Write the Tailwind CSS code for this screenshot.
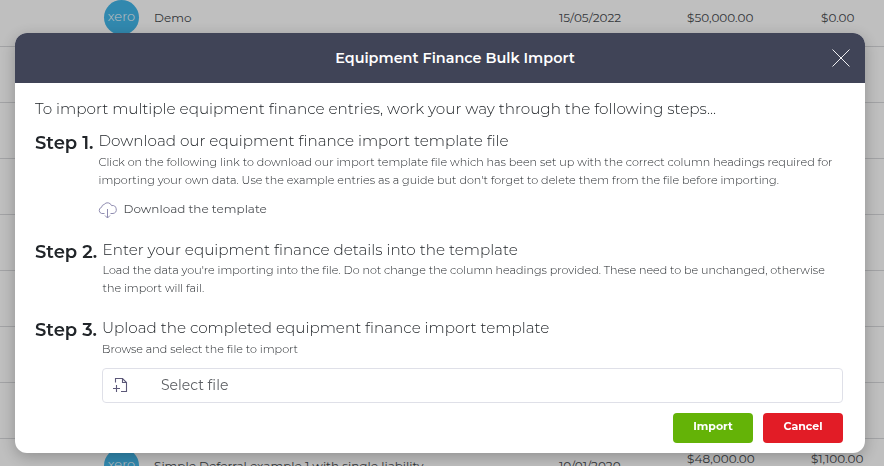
<!DOCTYPE html>
<html lang="en">
<head>
  <meta charset="UTF-8">
  <meta name="viewport" content="width=device-width, initial-scale=1.0">
  <title>Equipment Finance Bulk Import</title>
  <script src="https://cdn.jsdelivr.net/npm/@tailwindcss/browser@4"></script>
</head>
<body class="h-screen overflow-hidden bg-white font-[Montserrat,Inter,sans-serif] text-[#212529]">
  <!-- Finance list behind the modal -->
  <div class="-mt-[10px] h-[476px] overflow-hidden text-xs whitespace-nowrap text-[#45494d]">
    <div class="flex h-[57px] items-center border-b border-[#d9dadd] pl-[104px]">
      <div class="-mt-0.5 flex size-[35px] items-center justify-center rounded-full bg-[#42b6e9] pb-px text-[13px] font-light text-white">xero</div>
      <div class="-mt-px ml-[15px] w-[405px]">Demo</div>
      <div class="-mt-px w-[128px]">15/05/2022</div>
      <div class="-mt-px w-[134px]">$50,000.00</div>
      <div class="-mt-px">$0.00</div>
    </div>
    <div class="h-14 border-b border-[#d9dadd]"></div>
    <div class="h-14 border-b border-[#d9dadd]"></div>
    <div class="h-14 border-b border-[#d9dadd]"></div>
    <div class="h-14 border-b border-[#d9dadd]"></div>
    <div class="h-14 border-b border-[#d9dadd]"></div>
    <div class="h-14 border-b border-[#d9dadd]"></div>
    <div class="h-14 border-b border-[#d9dadd]"></div>
    <div class="flex h-14 items-center pl-[104px]">
      <div class="-mt-1 flex size-[35px] items-center justify-center rounded-full bg-[#42b6e9] pb-px text-[13px] font-light text-white">xero</div>
      <div class="-mt-0.5 ml-[15px] w-[405px]">Simple Deferral example 1 with single liability</div>
      <div class="-mt-0.5 w-[128px]">10/01/2020</div>
      <div class="-mt-4 w-[124px]">$48,000.00</div>
      <div class="-mt-4">$1,100.00</div>
    </div>
  </div>

  <!-- Modal -->
  <div class="fixed inset-0 bg-black/25 px-[15px] pt-[33px]">
    <div class="h-[420px] w-[850px] overflow-hidden rounded-xl bg-white shadow-[0_4px_16px_rgba(0,0,0,0.25)]">
      <div class="flex h-[50px] items-center bg-[#404457] pr-[15px] pl-[63px]">
        <h2 class="flex-1 pt-px text-center text-[14.4px] font-semibold text-white">Equipment Finance Bulk Import</h2>
        <svg class="size-[18px]" viewBox="0 0 18 18" fill="none" stroke="#f0f0f3" stroke-width="1"><path d="M0.5 0.5 17.5 17.5M17.5 0.5 0.5 17.5"/></svg>
      </div>
      <div class="pt-[14px] pr-[22px] pl-5 font-light whitespace-nowrap">
        <p class="text-[15.22px] leading-6">To import multiple equipment finance entries, work your way through the following steps...</p>

        <div class="mt-2 flex h-[109px]">
          <div class="w-[63.5px] shrink-0 pt-0.5 text-[18px] leading-6 font-semibold">Step 1.</div>
          <div>
            <h3 class="text-[15.2px] leading-6">Download our equipment finance import template file</h3>
            <p class="text-[11.16px] leading-[18px]">Click on the following link to download our import template file which has been set up with the correct column headings required for<br>importing your own data. Use the example entries as a guide but don't forget to delete them from the file before importing.</p>
            <a class="mt-2.5 flex items-center text-xs leading-[18px] font-normal text-[#4f5256]">
              <svg class="mt-0.5 mr-[7px] -ml-px size-[19px]" viewBox="0 0 19 19" fill="none" stroke="#8f8cb0" stroke-width="1"><path d="M6.5 12.500H3.700A3.200 3.200 0 0 1 3.600 6.300 3.300 3.300 0 0 1 6.200 3.400 4.200 4.200 0 0 1 13.500 4.600 4 4 0 0 1 15 12.500H12.500M9.500 8v9M7 14.500 9.500 17 12 14.500"/></svg>
              <span class="-mt-0.5">Download the template</span>
            </a>
          </div>
        </div>

        <div class="flex h-[78px]">
          <div class="w-[67.5px] shrink-0 pt-0.5 text-[18px] leading-6 font-semibold">Step 2.</div>
          <div>
            <h3 class="text-[15.2px] leading-6">Enter your equipment finance details into the template</h3>
            <p class="-mt-px text-[11.14px] leading-[18px]">Load the data you're importing into the file. Do not change the column headings provided. These need to be unchanged, otherwise<br>the import will fail.</p>
          </div>
        </div>

        <div class="flex h-[97px]">
          <div class="w-[67px] shrink-0 pt-0.5 text-[18px] leading-6 font-semibold">Step 3.</div>
          <div class="flex-1">
            <h3 class="text-[15.2px] leading-6">Upload the completed equipment finance import template</h3>
            <p class="text-[11.16px] leading-[18px]">Browse and select the file to import</p>
            <div class="mt-[10px] flex h-[35px] items-center rounded border border-[#dfe0e8] pl-[10px]">
              <svg class="-mt-0.5 size-4" viewBox="0 0 16 16" fill="none" stroke="#5c5878" stroke-width="1.100"><path d="M2.500 5.500V1.500H9.500L13.500 5.500V14.500H8M9.500 1.500V5.500H13.500M0 11.500H7M3.500 8V15"/></svg>
              <span class="-mt-0.5 ml-[32px] text-sm font-normal text-[#5c5f63]">Select file</span>
            </div>
          </div>
        </div>

        <div class="flex justify-end gap-[10px]">
          <button class="h-[30px] w-20 rounded bg-[#64b307] pb-1 text-[11px] font-bold text-white">Import</button>
          <button class="h-[30px] w-20 rounded bg-[#e21c26] pb-1 text-[11px] font-bold text-white">Cancel</button>
        </div>
      </div>
    </div>
  </div>
</body>
</html>
